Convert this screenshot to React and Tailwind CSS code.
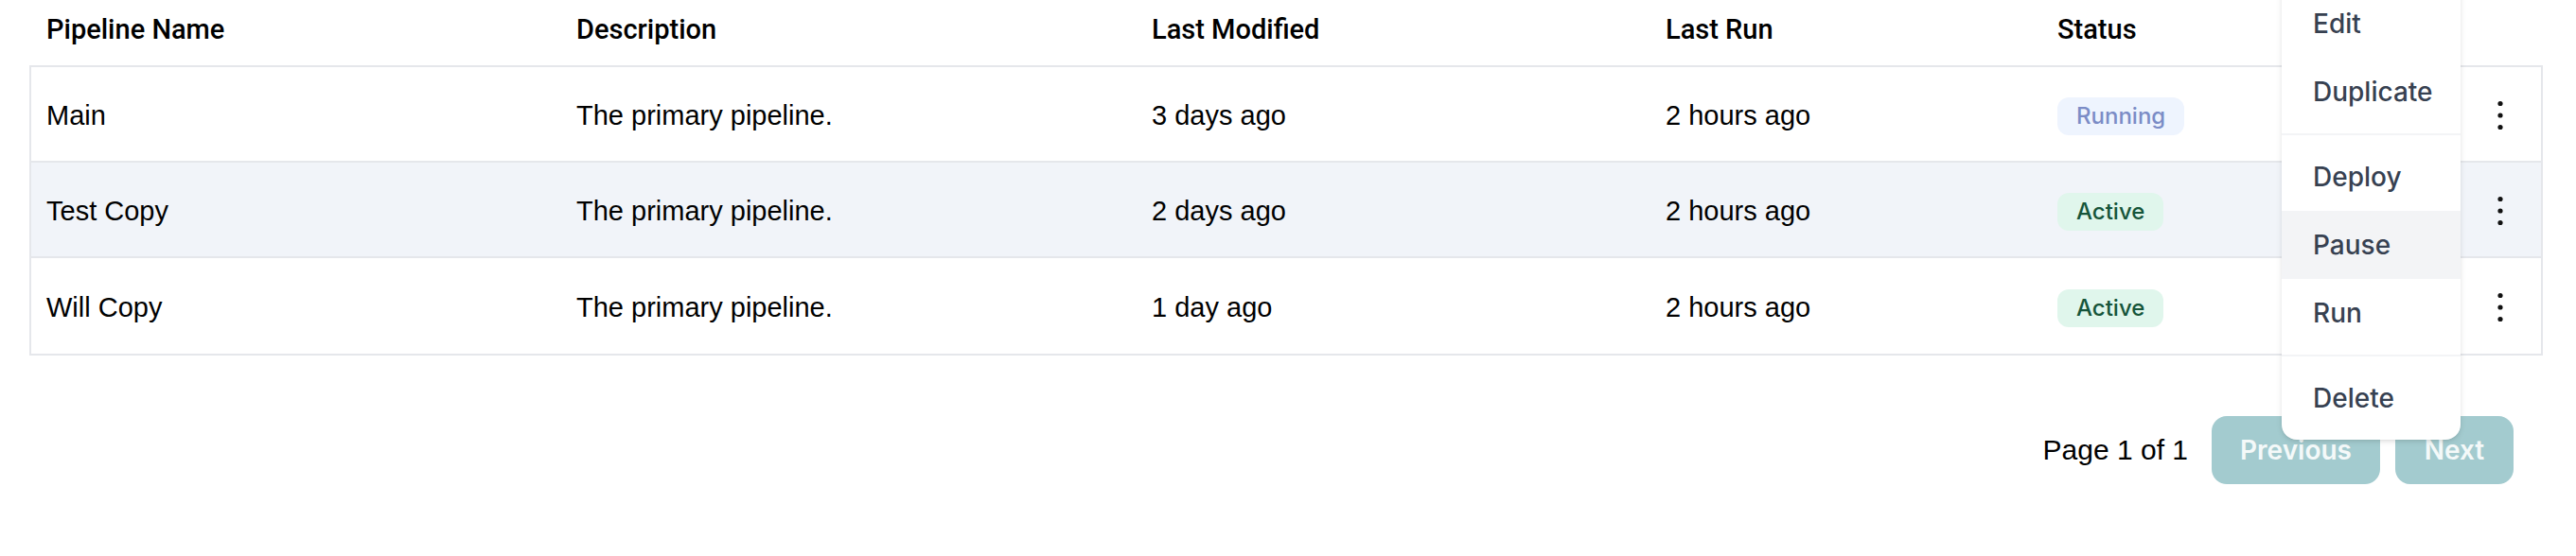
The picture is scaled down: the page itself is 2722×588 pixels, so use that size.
import React from "react";

const pipelines = [
  { name: "Main", description: "The primary pipeline.", modified: "3 days ago", lastRun: "2 hours ago", status: "Running" },
  { name: "Test Copy", description: "The primary pipeline.", modified: "2 days ago", lastRun: "2 hours ago", status: "Active" },
  { name: "Will Copy", description: "The primary pipeline.", modified: "1 day ago", lastRun: "2 hours ago", status: "Active" },
];

const cols = "grid grid-cols-[560px_608px_543px_414px_1fr_86px]";

const StatusBadge = ({ status }) => {
  if (status === "Running") {
    return (
      <span className="inline-block rounded-[12px] bg-[#eef4fe] px-[20px] py-[4px] font-['Inter',sans-serif] text-[24px] leading-[32px] font-medium text-[#7b8cc6]">
        Running
      </span>
    );
  }
  return (
    <span className="inline-block rounded-[12px] bg-[#e0f6ec] px-[20px] py-[4px] font-['Inter',sans-serif] text-[24px] leading-[32px] font-medium text-[#16553a]">
      {status}
    </span>
  );
};

const Kebab = () => (
  <svg width="8" height="32" viewBox="0 0 8 32" fill="#111">
    <circle cx="4" cy="3.5" r="2.6" />
    <circle cx="4" cy="16" r="2.6" />
    <circle cx="4" cy="28.5" r="2.6" />
  </svg>
);

// dropdown that is open over the table
const ActionMenu = () => {
  const groups = [["Edit", "Duplicate"], ["Deploy", "Pause", "Run"], ["Delete"]];
  return (
    <div className="absolute right-[122px] top-[-19px] w-[189px] overflow-hidden rounded-[16px] bg-white shadow-[0_2px_6px_0_rgba(0,0,0,0.1),0_2px_4px_-2px_rgba(0,0,0,0.1)]">
      <div className="divide-y-2 divide-gray-100">
        {groups.map((items, i) => (
          <ul key={i} className="py-[8px]">
            {items.map((item) => (
              <li
                key={item}
                className={`px-[33px] py-[16px] font-['Inter',sans-serif] text-[28px] leading-[40px] font-[450] text-[#374151] ${
                  item === "Pause" ? "bg-gray-100" : ""
                }`}
              >
                {item}
              </li>
            ))}
          </ul>
        ))}
      </div>
    </div>
  );
};

export default function App() {
  return (
    <div className="relative h-[588px] w-[2722px] overflow-hidden bg-white font-['Liberation_Sans',Arial,sans-serif] text-black">
      <div className="pl-[31px] pr-[35px]">
        {/* header */}
        <div className={`${cols} h-[69px] border-x-2 border-transparent pt-[11px] font-['Roboto',sans-serif] text-[29px] leading-[40px] font-medium`}>
          <div className="pl-[16px]">Pipeline Name</div>
          <div className="pl-[16px]">Description</div>
          <div className="pl-[16px]">Last Modified</div>
          <div className="pl-[16px]">Last Run</div>
          <div className="pl-[16px]">Status</div>
          <div />
        </div>

        {/* body */}
        <div className="divide-y-2 divide-[#e5e7eb] border-2 border-[#e5e7eb]">
          {pipelines.map((p, i) => (
            <div
              key={p.name}
              className={`${cols} h-[101px] items-center pt-[2px] text-[29px] leading-[40px] ${i === 1 ? "bg-[#f1f4f9]" : "bg-white"}`}
            >
              <div className="pl-[16px]">{p.name}</div>
              <div className="pl-[16px]">{p.description}</div>
              <div className="pl-[16px]">{p.modified}</div>
              <div className="pl-[16px]">{p.lastRun}</div>
              <div className="pl-[16px]">
                <StatusBadge status={p.status} />
              </div>
              <div className="flex justify-center">
                <Kebab />
              </div>
            </div>
          ))}
        </div>

        {/* pagination */}
        <div className="mt-[64px] flex items-center justify-end pr-[31px]">
          <span className="mr-[25px] text-[30px] leading-[40px]">Page 1 of 1</span>
          <button className="w-[178px] rounded-[16px] bg-[#a3cbcf] py-[16px] text-center font-['Inter',sans-serif] text-[28px] leading-[40px] font-semibold text-[#f4f9f9]">
            Previous
          </button>
          <button className="ml-[16px] w-[125px] rounded-[16px] bg-[#a3cbcf] py-[16px] text-center font-['Inter',sans-serif] text-[28px] leading-[40px] font-semibold text-[#f4f9f9]">
            Next
          </button>
        </div>
      </div>

      <ActionMenu />
    </div>
  );
}
